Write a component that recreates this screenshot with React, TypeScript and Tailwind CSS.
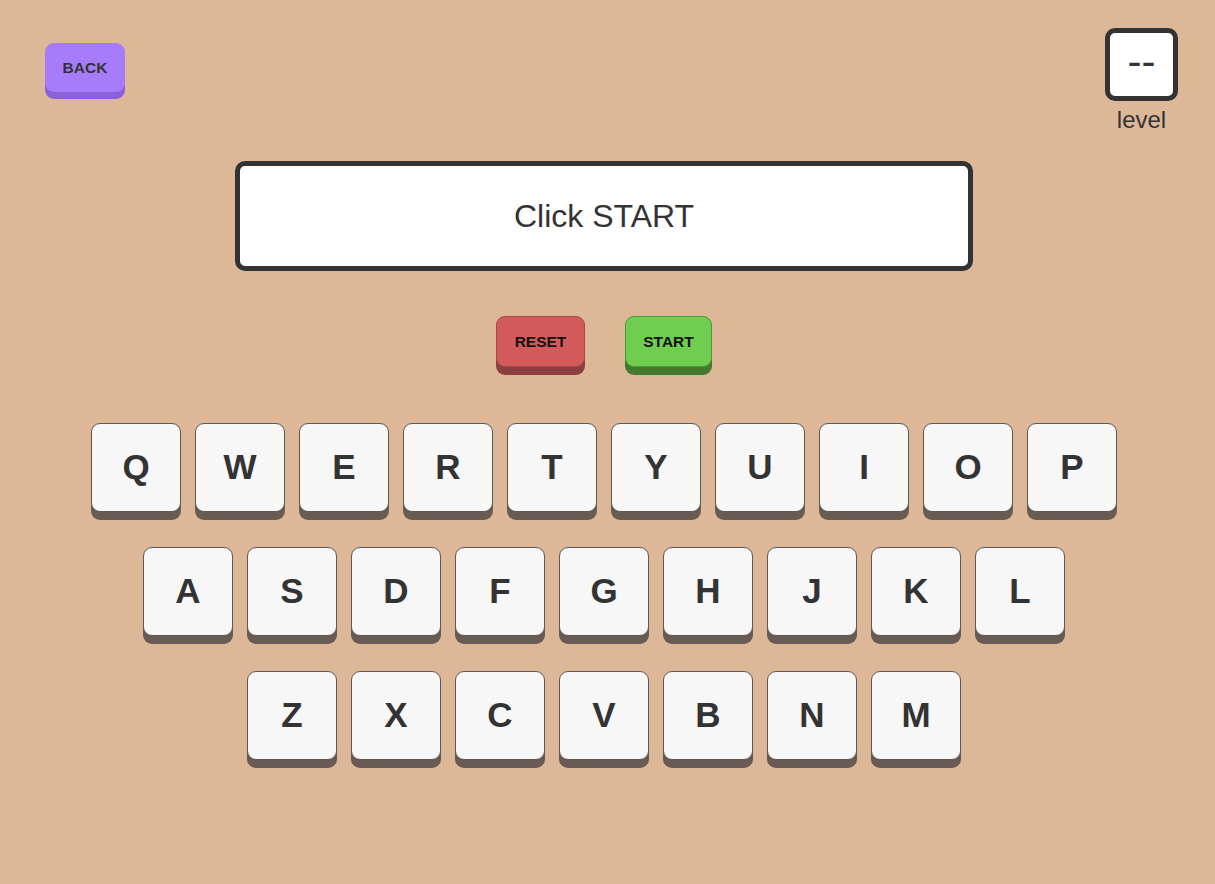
import React from "react";

const rows: string[][] = [
  ["Q", "W", "E", "R", "T", "Y", "U", "I", "O", "P"],
  ["A", "S", "D", "F", "G", "H", "J", "K", "L"],
  ["Z", "X", "C", "V", "B", "N", "M"],
];

function Key({ letter }: { letter: string }) {
  return (
    <button className="flex h-[89px] w-[90px] items-center justify-center rounded-[9px] border border-[#62574f] bg-[#f7f7f7] text-[35px] font-bold text-[#333] shadow-[0_8px_0_#675b53]">
      {letter}
    </button>
  );
}

export default function App() {
  return (
    <div className="min-h-screen w-full bg-[#dcb798] font-['Liberation_Sans',Arial,sans-serif] text-[#333]">
      {/* top bar */}
      <div className="flex items-start justify-between pl-[45px] pr-[37px] pt-[28px]">
        <button className="mt-[15px] h-[49px] w-[80px] rounded-[9px] bg-[#a77cfb] text-[15.5px] font-bold text-[#333] shadow-[0_7px_0_#8a61d9]">
          BACK
        </button>
        <div className="flex flex-col items-center">
          <div className="flex h-[73px] w-[73px] items-center justify-center rounded-[10px] border-[5px] border-[#333] bg-white pb-[5px]">
            <span className="text-[42px] leading-none text-[#333]">--</span>
          </div>
          <span className="mt-[1px] text-[24px] text-[#333]">level</span>
        </div>
      </div>

      <div className="flex flex-col items-center pr-[7px]">
        {/* message */}
        <div className="mt-[23px] flex h-[110px] w-[738px] items-center justify-center rounded-[10px] border-[5px] border-[#333] bg-white">
          <span className="text-[32px] text-[#333]">Click START</span>
        </div>

        {/* controls */}
        <div className="mt-[45px] flex gap-[40px]">
          <button className="h-[51px] w-[89px] rounded-[9px] border border-[#a84848] bg-[#d25a5a] text-[15.5px] font-bold text-[#111] shadow-[0_8px_0_#8b3f3f]">
            RESET
          </button>
          <button className="h-[51px] w-[87px] rounded-[9px] border border-[#4f9a38] bg-[#6fce4f] text-[15.5px] font-bold text-[#111] shadow-[0_8px_0_#447a2e]">
            START
          </button>
        </div>

        {/* keyboard */}
        <div className="mt-[56px] flex flex-col items-center gap-[35px]">
          {rows.map((row, i) => (
            <div key={i} className="flex gap-[14px]">
              {row.map((l) => (
                <Key key={l} letter={l} />
              ))}
            </div>
          ))}
        </div>
      </div>
    </div>
  );
}
